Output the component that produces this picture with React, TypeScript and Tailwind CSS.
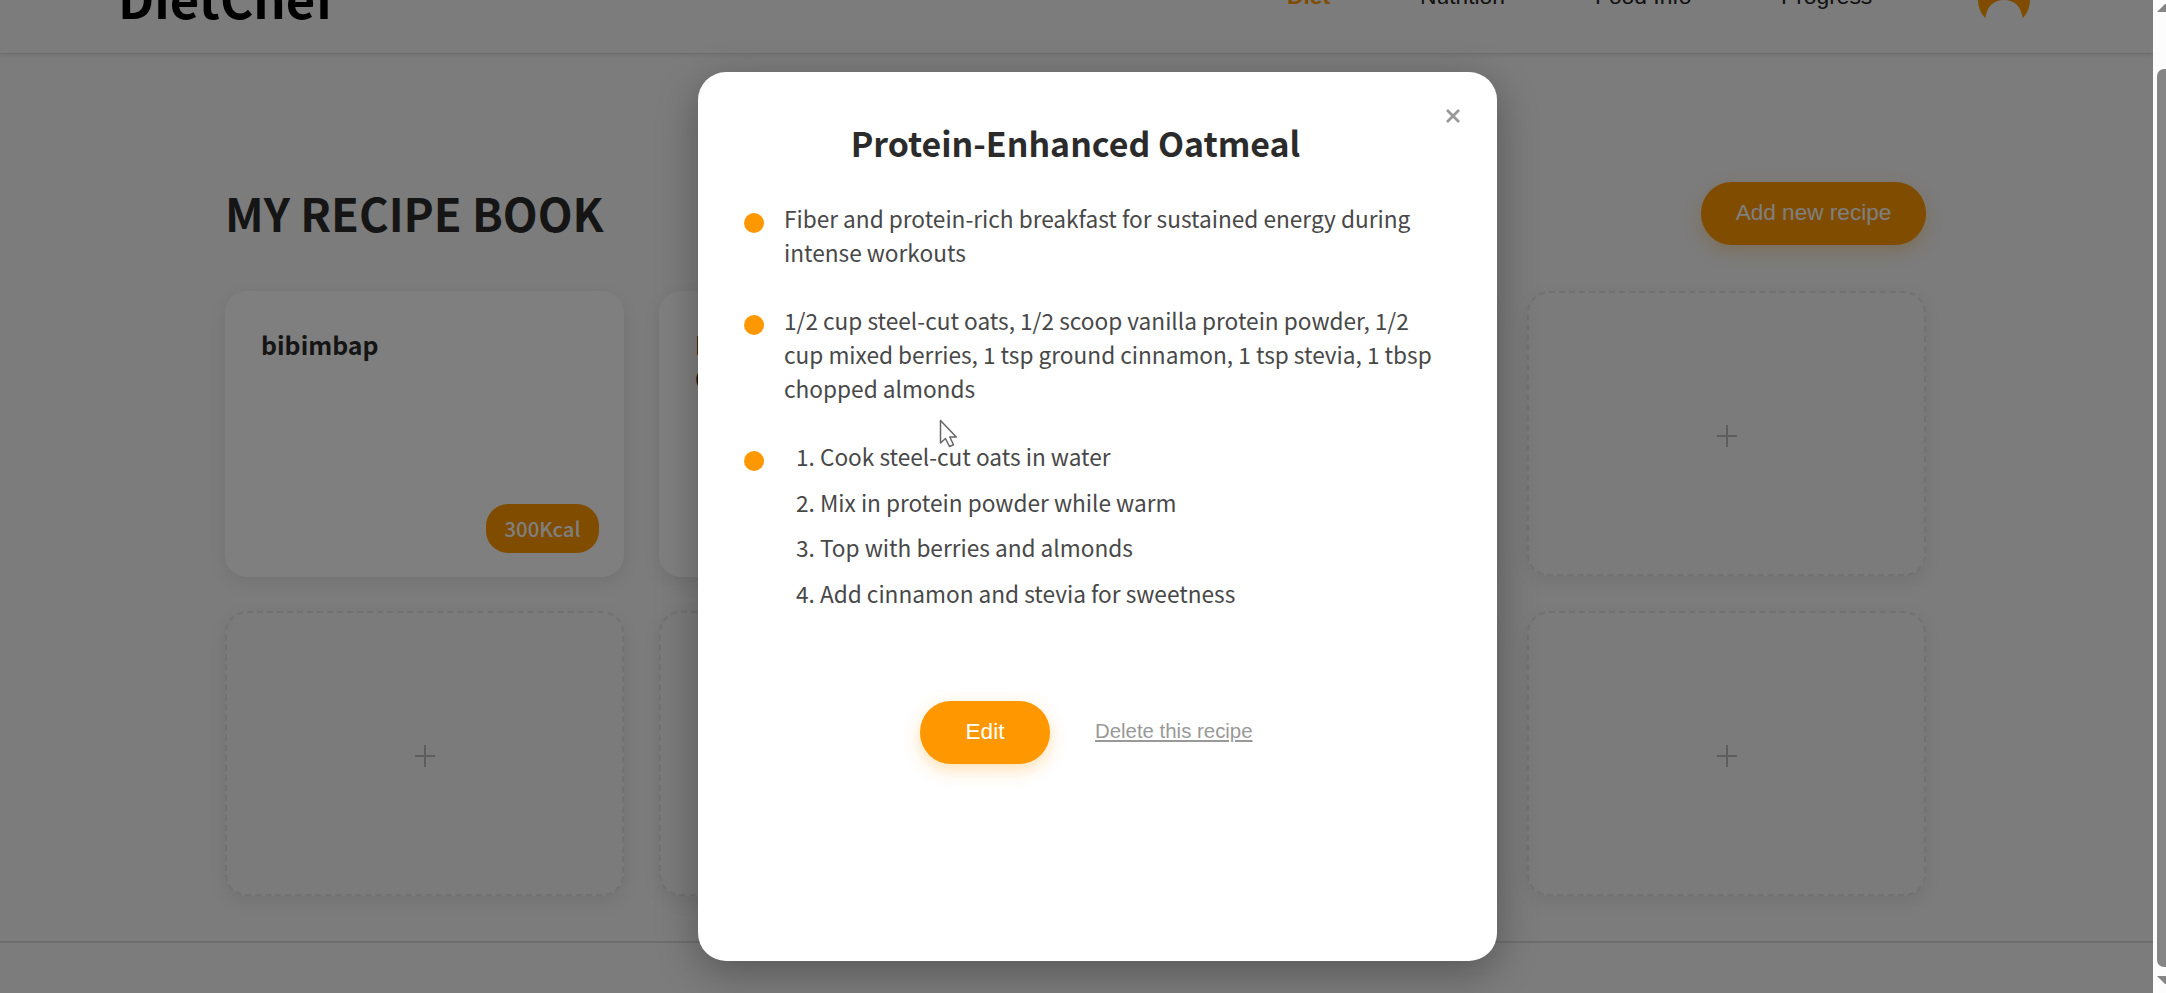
import React from "react";

const kr = "font-['Noto_Sans_CJK_KR','Noto_Sans_CJK_SC',sans-serif]";
const arial = "font-['Liberation_Sans',Arial,sans-serif]";

function Header() {
  return (
    <header className="-mt-[67px] flex h-[121px] shrink-0 items-center justify-between border-b border-[#dcdcdc] bg-[#f9f9f9] pr-[123px] pl-[118px] shadow-[0_2px_4px_rgba(0,0,0,0.07)]">
      <span className={`${kr} mt-[8px] text-[50.8px] leading-[60px] font-bold text-black`}>DietChef</span>
      <div className="flex items-center pt-[14px]">
        <nav className={`${arial} mb-[8px] flex text-[22.8px] leading-6 text-[#222]`}>
          <a className="w-[133px] font-bold text-[#ff9800]">Diet</a>
          <a className="w-[175px]">Nutrition</a>
          <a className="w-[186px]">Food Info</a>
          <a className="w-[197px]">Progress</a>
        </nav>
        <svg className="h-[52px] w-[52px]" viewBox="0 0 52 52">
          <path d="M7.200 44.300A26 26 0 1 1 44.800 44.300C43 32 36 26 26 26S9 32 7.200 44.300z" fill="#ff9800" />
          <circle cx="26" cy="14" r="8" fill="#f9f9f9" />
        </svg>
      </div>
    </header>
  );
}

function RecipeCard({ title, kcal }: { title: React.ReactNode; kcal: string }) {
  return (
    <div className={`${kr} flex h-[286px] flex-col justify-between rounded-[22px] bg-white pt-[36px] pr-[25px] pb-[24px] pl-[36px] shadow-[0_6px_17px_rgba(0,0,0,0.08)]`}>
      <h3 className="text-[24.9px] leading-[34px] font-semibold text-[#2b2b2b]">{title}</h3>
      <span className="flex h-[49px] w-[113px] items-center justify-center self-end rounded-[22px] bg-[#ff9800] text-[20.3px] font-medium text-white">{kcal}</span>
    </div>
  );
}

function EmptyCard() {
  return (
    <div className="flex h-[285px] items-center justify-center rounded-[22px] border-2 border-dashed border-[#e2e2e2] bg-[#f7f7f7] pt-[4px] shadow-[0_6px_17px_rgba(0,0,0,0.08)]">
      <svg className="h-[22px] w-[22px]" viewBox="0 0 22 22" stroke="#bdbdbd" strokeWidth="2">
        <path d="M11 0v22M1 11h20" />
      </svg>
    </div>
  );
}

function Bullet({ children }: { children: React.ReactNode }) {
  return (
    <li className="flex gap-[20px]">
      <span className="mt-[11px] h-5 w-5 shrink-0 rounded-full bg-[#ff9800]" />
      {children}
    </li>
  );
}

const steps = [
  "1. Cook steel-cut oats in water",
  "2. Mix in protein powder while warm",
  "3. Top with berries and almonds",
  "4. Add cinnamon and stevia for sweetness",
];

function RecipeModal() {
  return (
    <section className={`${kr} relative mt-[72px] ml-[698px] h-[889px] w-[799px] rounded-[28px] bg-white px-[46px] pt-[49px] shadow-[0_11px_42px_rgba(0,0,0,0.3)]`}>
      <button className="absolute top-[28px] right-[28px] flex h-8 w-8 items-center justify-center">
        <svg className="h-[14px] w-[14px]" viewBox="0 0 14 14" stroke="#999" strokeWidth="2.8">
          <path d="M1 1l12 12M13 1L1 13" />
        </svg>
      </button>
      <h2 className="pr-[44px] text-center text-[33.9px] leading-[44px] font-semibold text-[#2b2b2b]">Protein-Enhanced Oatmeal</h2>
      <ul className="mt-[37px] flex flex-col gap-[34px] text-[22.65px] leading-[34px] text-[#484848]">
        <Bullet>
          <p>Fiber and protein-rich breakfast for sustained energy during<br />intense workouts</p>
        </Bullet>
        <Bullet>
          <p>1/2 cup steel-cut oats, 1/2 scoop vanilla protein powder, 1/2<br />cup mixed berries, 1 tsp ground cinnamon, 1 tsp stevia, 1 tbsp<br />chopped almonds</p>
        </Bullet>
        <Bullet>
          <ol className="flex flex-col gap-[11.5px] pl-[12px]">
            {steps.map((s) => <li key={s}>{s}</li>)}
          </ol>
        </Bullet>
      </ul>
      <div className={`${arial} mt-[90.5px] flex items-center gap-[45px] pl-[176px]`}>
        <button className="h-[63px] w-[130px] rounded-[31px] bg-[#ff9800] pb-[2px] text-[22.6px] text-white shadow-[0_6px_17px_rgba(255,152,0,0.3)]">Edit</button>
        <a className="pb-[2px] text-[20.4px] text-[#999] underline">Delete this recipe</a>
      </div>
    </section>
  );
}

export default function App() {
  return (
    <div className="flex h-[993px] w-full overflow-hidden bg-white">
      <div className="relative flex w-[2153px] shrink-0 flex-col overflow-hidden bg-[#f8f8f8]">
        <Header />
        <main className="pr-[227px] pl-[225px]">
          <div className="mt-[128px] flex h-[63px] items-center justify-between">
            <h1 className={`${kr} mb-[2px] text-[45.3px] leading-[63px] font-semibold text-[#2b2b2b]`}>MY RECIPE BOOK</h1>
            <button className={`${arial} h-[63px] w-[225px] rounded-[31px] bg-[#ff9800] pb-[2px] text-[22.6px] text-white shadow-[0_6px_17px_rgba(255,152,0,0.3)]`}>Add new recipe</button>
          </div>
          <div className="mt-[46px] grid grid-cols-4 gap-x-[35px] gap-y-[34px]">
            <RecipeCard title="bibimbap" kcal="300Kcal" />
            <RecipeCard title={<>Protein-Enhanced<br />Oatmeal</>} kcal="350Kcal" />
            <EmptyCard />
            <EmptyCard />
            <EmptyCard />
            <EmptyCard />
            <EmptyCard />
            <EmptyCard />
          </div>
        </main>
        <footer className="mt-[45px] h-[60px] shrink-0 border-t-2 border-[#dcdcdc]" />
        <div className="absolute inset-0 bg-black/50">
          <RecipeModal />
          <svg className="absolute top-[419px] left-[939px] h-[29px] w-[19px]" viewBox="0 0 19 29" fill="#fff" stroke="#666" strokeWidth="1.5" strokeLinejoin="round">
            <path d="M1.500 1.500v22.500l5-4.500 4 8 4-1.800-3.700-7.700h6.500z" />
          </svg>
        </div>
      </div>
      <aside className="flex w-[13px] shrink-0 flex-col items-end bg-[#fcfcfc]">
        <svg className="mt-1 h-2 w-[9px]" viewBox="0 0 9 8" fill="#858585"><path d="M0 8L8 0h1v8z" /></svg>
        <div className="mt-[57px] h-[898px] w-[9px] rounded-l-[7px] bg-[#858585]" />
        <svg className="mt-[9px] h-2 w-[9px]" viewBox="0 0 9 8" fill="#858585"><path d="M0 0L8 8h1V0z" /></svg>
      </aside>
    </div>
  );
}
